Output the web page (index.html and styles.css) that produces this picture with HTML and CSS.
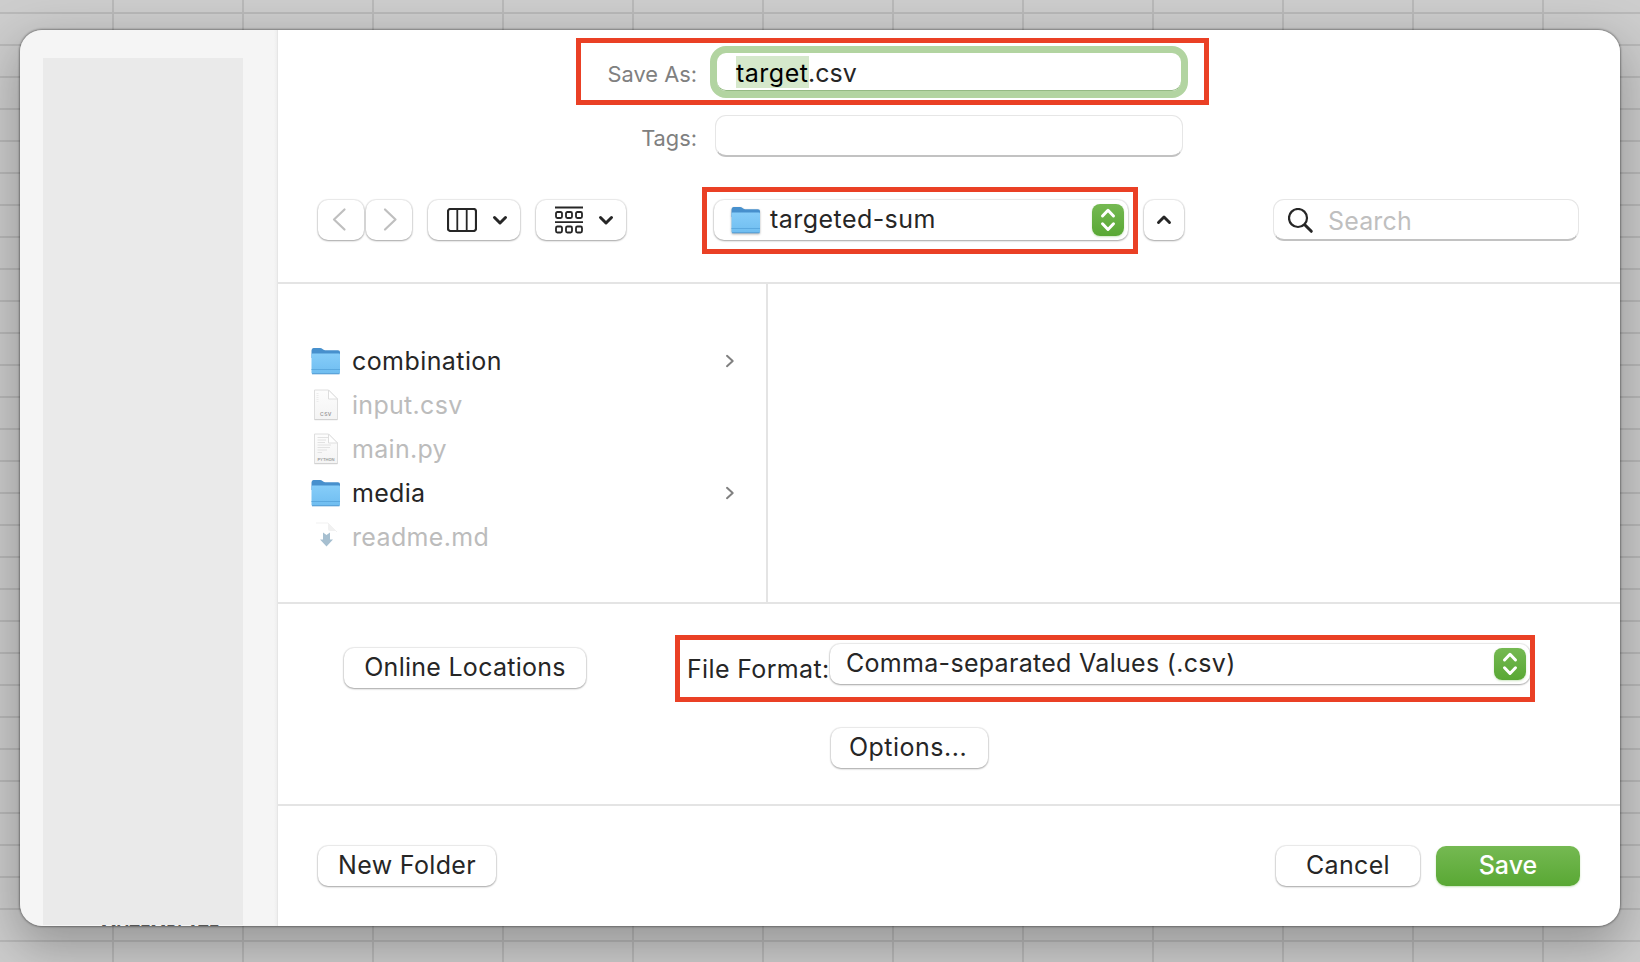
FILE: index.html
```html
<!DOCTYPE html>
<html lang="en">
<head>
<meta charset="utf-8">
<title>Save As</title>
<link rel="stylesheet" href="styles.css">
</head>
<body>
<svg class="defs" width="0" height="0" aria-hidden="true">
  <defs>
    <linearGradient id="folder-front" x1="0" y1="0" x2="0" y2="1"><stop offset="0" stop-color="#86cdf9"/><stop offset="1" stop-color="#6fbdf0"/></linearGradient>
    <linearGradient id="page-fill" x1="0" y1="0" x2="0" y2="1"><stop offset="0" stop-color="#fdfdfd"/><stop offset="1" stop-color="#f4f4f4"/></linearGradient>
    <symbol id="folder" viewBox="0 0 30 30">
      <path d="M.5 4.500Q.5 2 2.500 2H9Q10.500 2 11.500 3T14 4.200H27Q29 4.200 29 6V12H.5Z" fill="#4790cd"/>
      <path d="M.5 8.500Q.5 7.500 1.500 7.500H28Q29 7.500 29 8.500V26.500Q29 28 27.500 28H2Q.5 28 .5 26.500Z" fill="url(#folder-front)"/>
      <path d="M.5 23.500H29" stroke="#5ba9df" stroke-width="1"/>
      <path d="M1 27.800H28.500" stroke="#549bd0" stroke-width="1"/>
    </symbol>
    <symbol id="page" viewBox="0 0 30 34">
      <path d="M3.500 2H17.500L26.500 11V31.500H3.500Z" fill="url(#page-fill)" stroke="#dedede"/>
      <path d="M17.500 2V11H26.500Z" fill="#fff" stroke="#dedede"/>
      <path d="M3.500 31.700H26.500" stroke="#cfcfcf"/>
    </symbol>
    <symbol id="updown" viewBox="0 0 32 32">
      <path d="M10.500 12 16 6.300l5.500 5.700M10.500 19.800l5.500 5.700 5.500-5.700" fill="none" stroke="#fff" stroke-width="3" stroke-linecap="round" stroke-linejoin="round"/>
    </symbol>
    <symbol id="down" viewBox="0 0 16 12"><path d="M2.500 3.500 8 9l5.500-5.500" fill="none" stroke="#262626" stroke-width="3" stroke-linecap="round" stroke-linejoin="round"/></symbol>
  </defs>
</svg>
<div class="dialog">
  <aside class="sidebar"><div class="sidebar-cover"></div><div class="sidebar-item">MYTEMPLATE</div></aside>
  <main class="main">
    <section class="top">
      <div class="field-row">
        <label class="label save-label">Save As:</label>
        <div class="name-field"><span class="selected">target</span><span class="ext">.csv</span></div>
      </div>
      <div class="field-row tags-row">
        <label class="label tags-label">Tags:</label>
        <div class="tags-field"></div>
      </div>
      <div class="toolbar">
        <div class="btn nav"><svg width="46" height="40" viewBox="0 0 46 40"><path d="M26.500 9.500 16 19.500 26.500 29.500" fill="none" stroke="#bfbfbf" stroke-width="2.200" stroke-linecap="round" stroke-linejoin="round"/></svg></div>
        <div class="btn nav next"><svg width="46" height="40" viewBox="0 0 46 40"><path d="M19 9.500 29.500 19.500 19 29.500" fill="none" stroke="#bfbfbf" stroke-width="2.200" stroke-linecap="round" stroke-linejoin="round"/></svg></div>
        <div class="btn view">
          <svg width="30" height="24" viewBox="0 0 30 24"><rect x="1" y="1" width="28" height="22" rx="2.500" fill="none" stroke="#262626" stroke-width="2.200"/><path d="M10.300 1v22M19.700 1v22" stroke="#262626" stroke-width="1.800"/></svg>
          <svg width="16" height="12"><use href="#down"/></svg>
        </div>
        <div class="btn group">
          <svg width="28" height="28" viewBox="0 0 28 28" fill="none" stroke="#262626" stroke-width="1.800"><path d="M0 1.500H28M0 16.200H28"/><rect x="1" y="6" width="6" height="6" rx="1.400"/><rect x="11" y="6" width="6" height="6" rx="1.400"/><rect x="21" y="6" width="6" height="6" rx="1.400"/><rect x="1" y="20.500" width="6" height="6" rx="1.400"/><rect x="11" y="20.500" width="6" height="6" rx="1.400"/><rect x="21" y="20.500" width="6" height="6" rx="1.400"/></svg>
          <svg width="16" height="12"><use href="#down"/></svg>
        </div>
        <div class="btn location">
          <svg class="folder" width="30" height="30"><use href="#folder"/></svg>
          <span class="t-location">targeted-sum</span>
          <svg class="stepper" width="32" height="32"><use href="#updown"/></svg>
        </div>
        <div class="btn collapse"><svg width="16" height="12" viewBox="0 0 16 12"><path d="M2.500 8.500 8 3 13.500 8.500" fill="none" stroke="#262626" stroke-width="2.900" stroke-linecap="round" stroke-linejoin="round"/></svg></div>
        <div class="search">
          <svg width="26" height="26" viewBox="0 0 26 26" fill="none" stroke="#262626" stroke-linecap="round"><circle cx="10" cy="10" r="9" stroke-width="2.200"/><path d="M17 17 23.300 23.300" stroke-width="3"/></svg>
          <span class="t-search">Search</span>
        </div>
      </div>
    </section>
    <section class="browser">
      <ul class="column">
        <li class="row"><svg class="icon" width="30" height="30"><use href="#folder"/></svg><span class="t-combination">combination</span><svg class="chev" width="10" height="14" viewBox="0 0 10 14"><path d="M2 1.800 7.700 7 2 12.200"/></svg></li>
        <li class="row dim"><svg class="icon" width="30" height="34" viewBox="0 0 30 34"><use href="#page"/><path d="M6.500 5v9" stroke="#ececec" stroke-width="2" stroke-dasharray="1 1"/><text x="15" y="28.200" class="kind csv">CSV</text></svg><span class="t-input">input.csv</span></li>
        <li class="row dim"><svg class="icon" width="30" height="34" viewBox="0 0 30 34"><use href="#page"/><path d="M6.500 5.500H17M6.500 8H15M6.500 10.500H14M6.500 13H20M6.500 15.500H19M6.500 18H16M6.500 20.500H11" stroke="#e2e2e2"/><text x="15" y="28.500" class="kind py">PYTHON</text></svg><span class="t-main">main.py</span></li>
        <li class="row"><svg class="icon" width="30" height="30"><use href="#folder"/></svg><span class="t-media">media</span><svg class="chev" width="10" height="14" viewBox="0 0 10 14"><path d="M2 1.800 7.700 7 2 12.200"/></svg></li>
        <li class="row dim"><svg class="icon" width="30" height="34" viewBox="0 0 30 34"><path d="M5 3H17L26 12" fill="none" stroke="#f1f1f1"/><path d="M17 3.500V9Q17 11 19 11H25Z" fill="#f1f1f1"/><path d="M12 12.500 15.500 15 19 12.500V19.500H22L15.500 26.500 9 19.500H12Z" fill="#a6bfd0"/></svg><span class="t-readme">readme.md</span></li>
      </ul>
    </section>
    <section class="options">
      <div class="btn online"><span class="t-online">Online Locations</span></div>
      <div class="format">
        <div class="format-row">
          <label class="t-format">File Format:</label>
          <div class="btn format-popup"><span class="t-comma">Comma-separated Values (.csv)</span><svg class="stepper" width="32" height="32"><use href="#updown"/></svg></div>
        </div>
        <div class="btn opts"><span class="t-options">Options...</span></div>
      </div>
    </section>
    <footer class="footer">
      <div class="btn newfolder"><span class="t-new">New Folder</span></div>
      <div class="btn cancel"><span class="t-cancel">Cancel</span></div>
      <div class="btn save"><span class="t-save">Save</span></div>
    </footer>
  </main>
  <div class="mark mark-name"></div>
  <div class="mark mark-location"></div>
  <div class="mark mark-format"></div>
</div>
</body>
</html>
```
FILE: styles.css
```css
* { box-sizing: border-box; }
body {
  margin: 0;
  width: 1640px;
  height: 962px;
  padding: 30px 20px 36px;
  overflow: hidden;
  font-family: Inter, "Liberation Sans", sans-serif;
  font-size: 25px;
  line-height: 40px;
  color: #262626;
  background-color: #cdcdcd;
  background-image:
    linear-gradient(#b9b9b9, #b9b9b9 2px, transparent 2px),
    linear-gradient(90deg, #b9b9b9, #b9b9b9 2px, transparent 2px);
  background-size: 100% 32px, 130px 100%;
  background-position: 0 12px, 112px 0;
}
.defs { position: absolute; }
svg { display: block; flex: none; }
span, label { white-space: nowrap; }
.dialog {
  position: relative;
  display: flex;
  width: 1600px;
  height: 896px;
  border-radius: 22px;
  box-shadow: 0 0 2px 1px rgba(0,0,0,.35), 0 18px 50px 4px rgba(0,0,0,.27);
}
.sidebar {
  width: 258px;
  height: 896px;
  padding: 28px 0 0 23px;
  overflow: hidden;
  border-radius: 22px 0 0 22px;
  background: linear-gradient(90deg, #f5f5f5 254px, #eeeeee 257px, #dedede 258px);
}
.sidebar-cover { width: 200px; height: 867px; background: #eaeaea; }
.sidebar-item { padding-left: 58px; margin-top: -13px; font-size: 17px; font-weight: 600; color: #555; }
.main {
  display: flex;
  flex-direction: column;
  width: 1342px;
  border-radius: 0 22px 22px 0;
  background: #fff;
}
.top { height: 254px; padding-top: 16px; border-bottom: 2px solid #e4e4e4; }
.field-row { display: flex; height: 52px; padding-left: 278px; }
.label { width: 141px; text-align: right; font-size: 21.800px; color: #808080; }
.save-label { padding-top: 8px; }
.tags-label { padding-top: 3px; }
.name-field {
  display: flex;
  width: 478px;
  height: 52px;
  margin-left: 13px;
  padding: 3px 0 0 19px;
  border: 7px solid #b2d4a1;
  border-radius: 16px;
  box-shadow: inset 0 -1px 0 #94b984;
  line-height: 34px;
}
.selected { width: 73px; height: 32px; background: #d5e8cb; color: #000; letter-spacing: .5px; }
.ext { margin-left: -1px; }
.tags-row { margin-top: 17px; height: 42px; }
.tags-field { width: 468px; height: 42px; margin-left: 18px; }
.tags-field, .search {
  border: 1px solid #e6e6e6;
  border-bottom: 2px solid #c2c2c2;
  border-radius: 11px;
}
.toolbar { display: flex; height: 42px; margin: 42px 0 0 40px; }
.btn {
  display: flex;
  height: 40px;
  margin-top: 1px;
  justify-content: center;
  border-radius: 10px;
  background: #fff;
  box-shadow: 0 0 1px 1px rgba(0,0,0,.08), 0 1px 2px rgba(0,0,0,.3);
  line-height: 38px;
}
.nav { width: 46px; }
.next { margin-left: 2px; }
.view, .group { justify-content: flex-start; align-items: center; }
.view { width: 92px; margin-left: 16px; padding-left: 19px; gap: 15px; }
.group { width: 90px; margin-left: 16px; padding-left: 19px; gap: 15px; }
.location { width: 414px; margin-left: 88px; padding: 4px 4px 0 17px; justify-content: flex-start; }
.location span { margin: -4px 0 0 9px; }
.t-location { letter-spacing: .45px; }
.folder { margin-top: 1px; filter: drop-shadow(0 1px 1px rgba(0,0,0,.3)); }
.stepper { margin-left: auto; border-radius: 8px; background: linear-gradient(#75b952, #59a834); box-shadow: 0 1px 2px rgba(89,168,52,.3); }
.collapse { width: 40px; margin-left: 16px; align-items: center; }
.search { display: flex; width: 306px; height: 42px; margin-left: 89px; padding: 8px 0 0 14px; }
.search span { margin: -7px 0 0 14px; color: #bfbfbf; letter-spacing: .15px; }
.browser { height: 320px; border-bottom: 2px solid #e4e4e4; }
.column { width: 490px; height: 318px; margin: 0; padding: 55px 31px 0 33px; border-right: 2px solid #e4e4e4; list-style: none; }
.row { display: flex; align-items: center; height: 44px; }
.row span { margin-left: 11px; }
.t-combination { letter-spacing: .42px; }
.t-input, .t-main, .t-media { letter-spacing: .3px; }
.t-readme { letter-spacing: .35px; }
.dim { color: #bcbcbc; }
.chev { margin-left: auto; fill: none; stroke: #808080; stroke-width: 2; stroke-linecap: round; stroke-linejoin: round; }
.kind { text-anchor: middle; font-weight: 600; fill: #999; }
.csv { font-size: 5px; letter-spacing: .4px; }
.py { font-size: 4px; letter-spacing: 0; }
.options { display: flex; height: 202px; padding: 40px 0 0 66px; border-bottom: 2px solid #e4e4e4; }
.options .btn { margin-top: 0; }
.options .online { width: 242px; margin-top: 4px; }
.t-online { letter-spacing: .27px; }
.format { margin-left: 101px; }
.format-row { display: flex; height: 40px; }
.format-row label { width: 143px; padding-top: 5px; letter-spacing: .35px; }
.format-popup { width: 700px; padding: 4px 4px 0 16px; justify-content: flex-start; }
.format-popup span { margin-top: -4px; letter-spacing: .3px; }
.options .opts { width: 157px; margin: 44px 0 0 144px; }
.t-options { margin-left: -3px; letter-spacing: .5px; }
.footer { display: flex; padding: 39px 0 0 40px; }
.newfolder { width: 178px; }
.t-new, .t-cancel { letter-spacing: .33px; }
.cancel { width: 144px; margin-left: 780px; }
.save { width: 144px; margin-left: 16px; color: #fff; background: linear-gradient(#75b952, #59a834); box-shadow: 0 1px 2px rgba(89,168,52,.35); font-weight: 500; }
.mark { position: absolute; height: 67px; border: 5px solid #ea4025; }
.mark-name { left: 556px; top: 8px; width: 633px; }
.mark-location { left: 682px; top: 157px; width: 436px; }
.mark-format { left: 655px; top: 605px; width: 860px; }
```
